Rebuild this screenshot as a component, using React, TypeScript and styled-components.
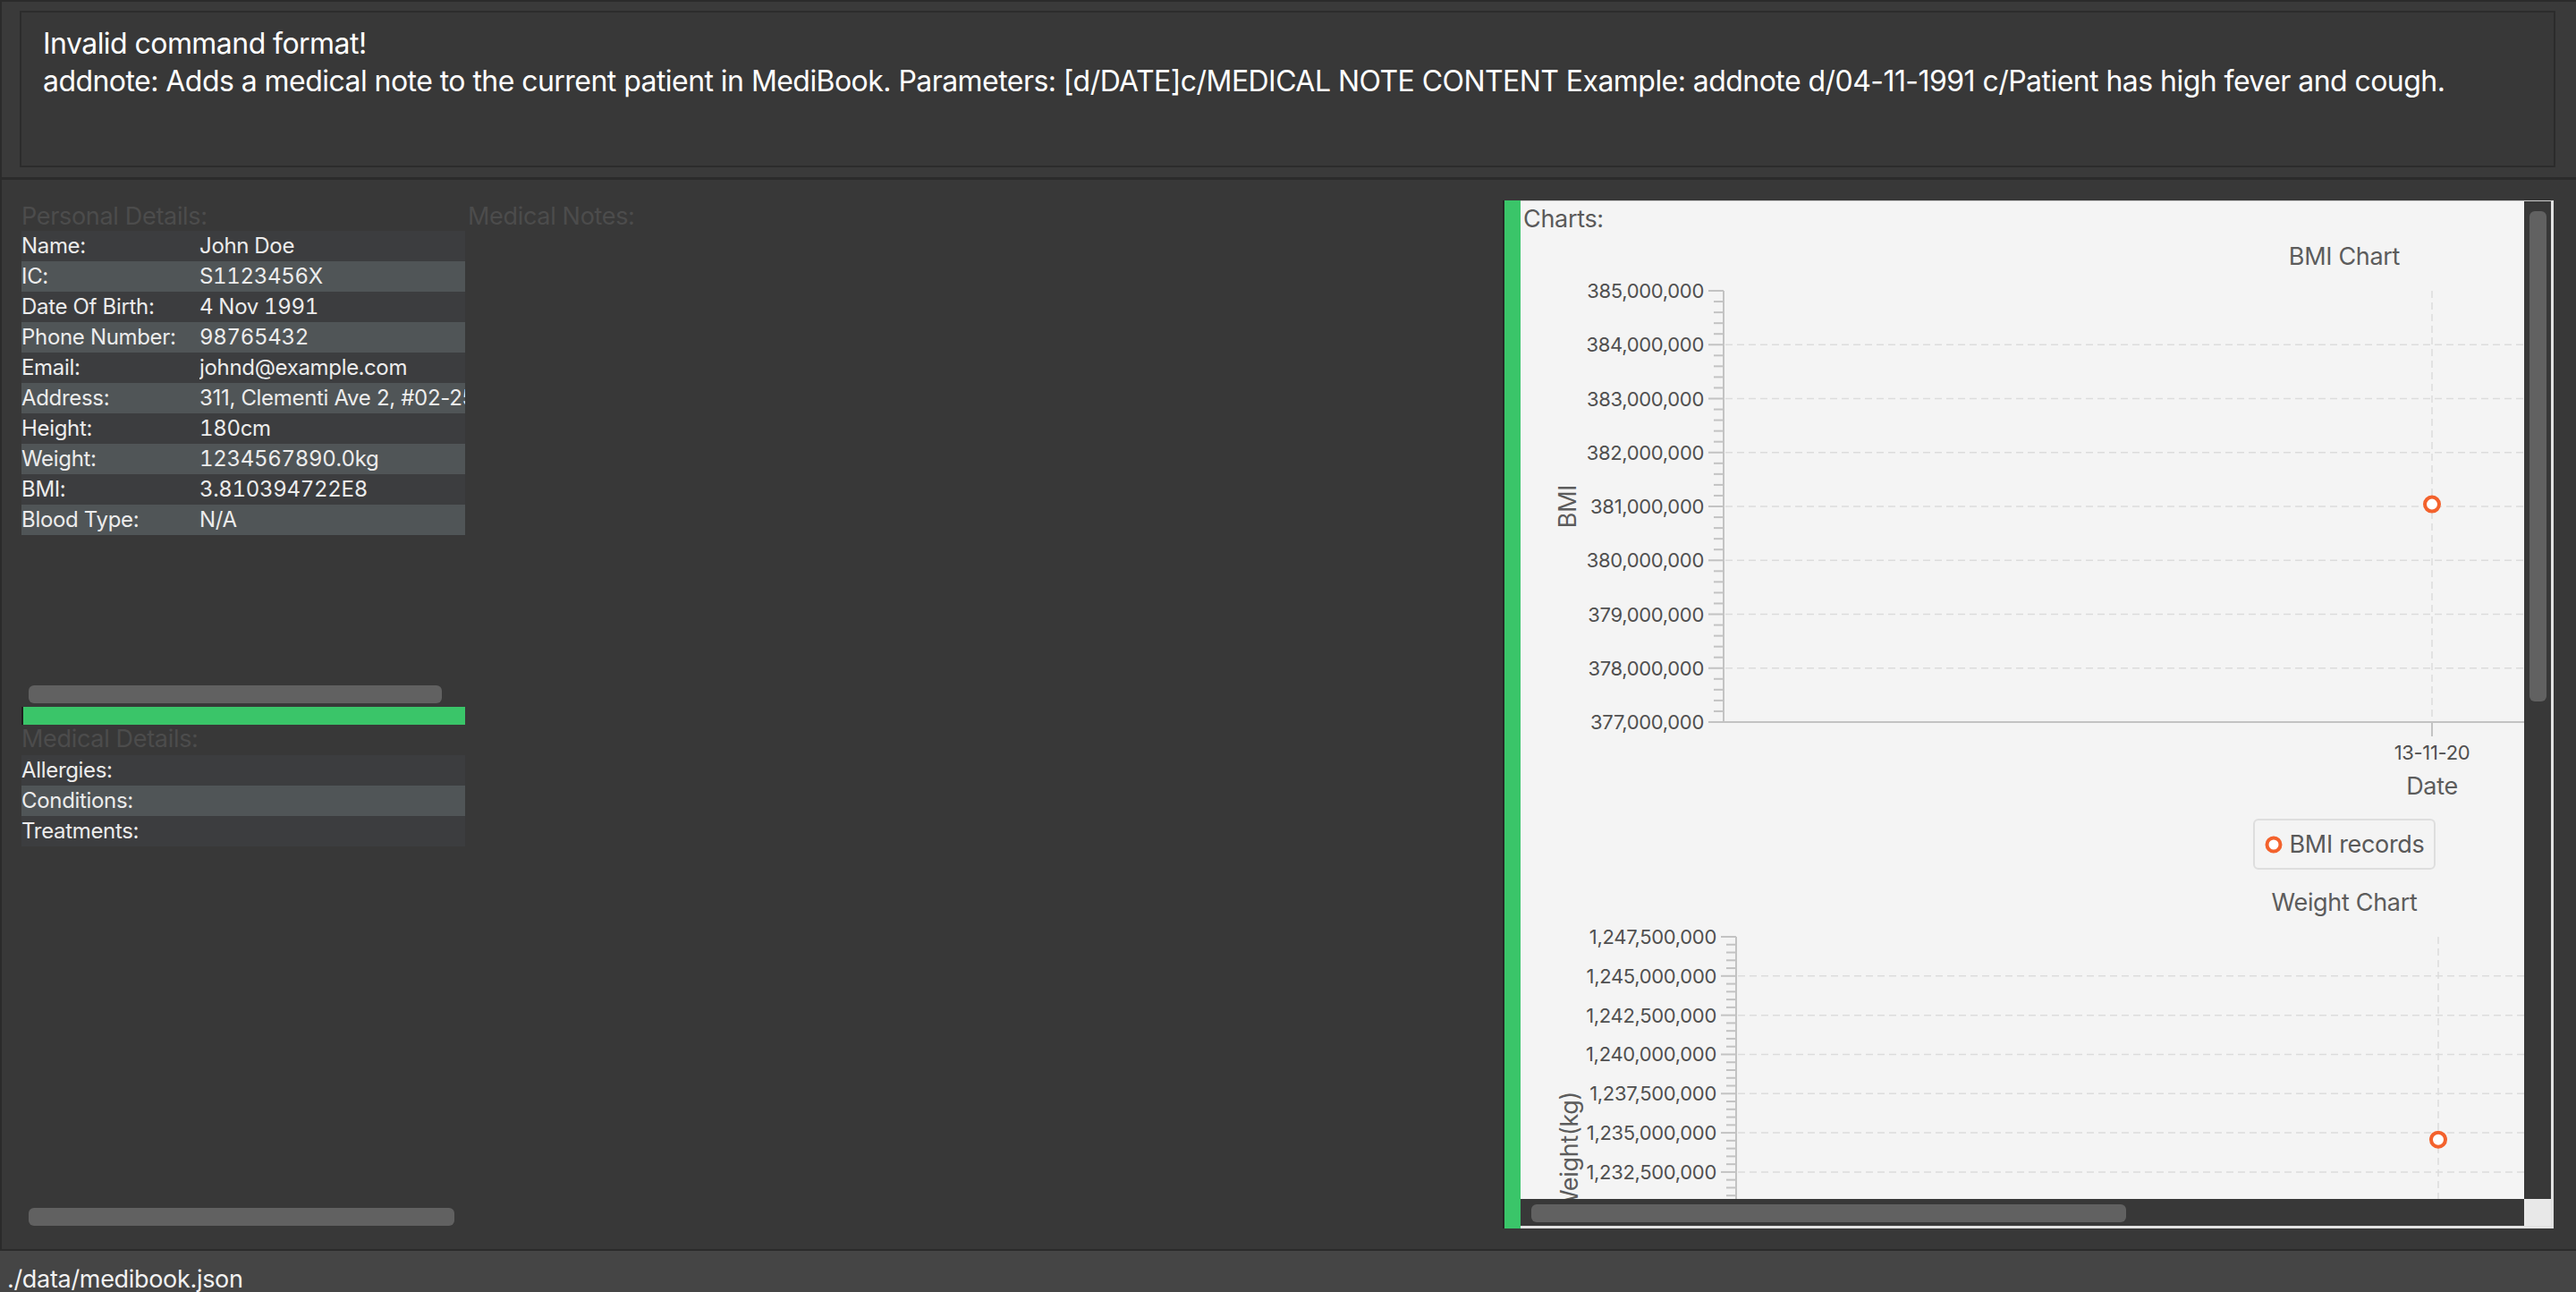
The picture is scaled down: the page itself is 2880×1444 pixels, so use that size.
import React from "react";
import styled, { createGlobalStyle } from "styled-components";

const FONT = `Inter, "Liberation Sans", Arial, sans-serif`;

const GlobalStyle = createGlobalStyle`
  html, body { margin: 0; padding: 0; background: #383838; }
  body {
    width: 2880px; height: 1444px; overflow: hidden;
    font-family: ${FONT};
    letter-spacing: -0.32px;
  }
  #root { width: 2880px; height: 1444px; }
  * { box-sizing: border-box; }
`;

const GREEN = "#3ac569";
const ORANGE = "#f3622d";

const Window = styled.div`
  width: 2880px;
  height: 1444px;
  display: flex;
  flex-direction: column;
  background: #383838;
  border-top: 2px solid #2b2b2b;
  overflow: hidden;
`;

const ResultPane = styled.div`
  height: 196px;
  display: flex;
  padding: 10px 23px 11px 20px;
  border-left: 2px solid #2b2b2b;
  background: #3a3a3a;
`;

const ResultBox = styled.div`
  flex: 1;
  border: 2px solid #2c2c2c;
  background: #383838;
  padding: 14px 24px;
  color: #ffffff;
  font-size: 32px;
  line-height: 42px;
  letter-spacing: -0.55px;
  white-space: nowrap;
  overflow: hidden;
`;

const Divider = styled.div<{ $h: number; $c: string }>`
  height: ${(p) => p.$h}px;
  background: ${(p) => p.$c};
  flex: none;
`;

const Main = styled.div`
  height: 1195px;
  display: grid;
  grid-template-columns: 496px 1160px 1175px;
  grid-template-rows: 1149px;
  padding: 23px 25px 23px 22px;
  border-left: 2px solid #2b2b2b;
`;

const LeftColumn = styled.div`
  display: flex;
  flex-direction: column;
  padding: 2px 0 3px 0;
  min-height: 0;
`;

const PersonalPane = styled.div`
  height: 564px;
  display: flex;
  flex-direction: column;
`;

const SectionHeading = styled.div<{ $gap?: number }>`
  font-size: 27px;
  line-height: 32px;
  color: #4c4c4c;
  white-space: nowrap;
  margin-bottom: ${(p) => p.$gap ?? 0}px;
`;

const DetailRow = styled.div<{ $alt: boolean }>`
  display: grid;
  grid-template-columns: 199px 1fr;
  height: 34px;
  line-height: 34px;
  font-size: 24px;
  color: #ececec;
  background: ${(p) => (p.$alt ? "#505557" : "#3c3d3f")};
  white-space: nowrap;
  overflow: hidden;
`;

const LabelCell = styled.span`
  overflow: hidden;
`;

const ValueCell = styled.span<{ $prose?: boolean }>`
  overflow: hidden;
  font-variant-numeric: ${(p) => (p.$prose ? "normal" : "tabular-nums")};
`;

const Spacer = styled.div`
  flex: 1;
`;

const Thumb = styled.div<{ $w: number; $bottom?: number }>`
  width: ${(p) => p.$w}px;
  height: 20px;
  margin-left: 8px;
  margin-bottom: ${(p) => p.$bottom ?? 0}px;
  border-radius: 6px;
  background: #616161;
  flex: none;
`;

const GreenBar = styled.div`
  height: 20px;
  background: ${GREEN};
  border-left: 2px solid #1e1e1e;
  flex: none;
`;

const NotesColumn = styled.div`
  padding: 2px 0 0 3px;
`;

const ChartsFrame = styled.div`
  display: flex;
  border-left: 2px solid #262626;
  min-height: 0;
`;

const GreenStripe = styled.div`
  width: 18px;
  background: ${GREEN};
  flex: none;
`;

const ChartsPanel = styled.div`
  flex: 1;
  min-width: 0;
  display: grid;
  grid-template-columns: 1fr 30px;
  grid-template-rows: 1fr 30px;
  background: #f4f4f4;
  border-top: 1px solid #cdcdcd;
  border-right: 3px solid #e2e2e2;
  border-bottom: 3px solid #e2e2e2;
`;

const Viewport = styled.div`
  overflow: hidden;
  min-width: 0;
  min-height: 0;
`;

const VTrack = styled.div`
  background: #383838;
  padding: 11px 5px 0 6px;
`;

const VThumb = styled.div`
  width: 19px;
  height: 548px;
  border-radius: 6px;
  background: #616161;
`;

const HTrack = styled.div`
  background: #383838;
  padding: 6px 0 0 12px;
`;

const HThumb = styled.div`
  width: 665px;
  height: 20px;
  border-radius: 6px;
  background: #616161;
`;

const Corner = styled.div`
  background: #e8e8e8;
`;

const ChartsContent = styled.div`
  width: 1842px;
  padding-top: 4px;
  display: flex;
  flex-direction: column;
`;

const ChartsLabel = styled.div`
  font-size: 27px;
  line-height: 32px;
  padding-left: 3px;
  color: #5a5a5a;
  margin-bottom: 10px;
`;

const ChartBlock = styled.div`
  width: 1842px;
  display: flex;
  flex-direction: column;
  margin-bottom: 21px;
  flex: none;
`;

const ChartTitle = styled.div`
  text-align: center;
  font-size: 27px;
  line-height: 32px;
  color: #5c5c5c;
`;

const PlotSvg = styled.svg`
  display: block;
  font-family: ${FONT};
`;

const AxisTitle = styled.div<{ $left: number }>`
  padding-left: ${(p) => p.$left}px;
  padding-right: 31px;
  text-align: center;
  font-size: 27px;
  line-height: 32px;
  color: #5c5c5c;
`;

const Legend = styled.div`
  align-self: center;
  margin-top: 20px;
  height: 57px;
  display: flex;
  align-items: center;
  gap: 8px;
  padding: 0 11px 0 11px;
  border: 2px solid #dedede;
  border-radius: 6px;
  font-size: 27px;
  color: #595959;
  white-space: nowrap;
`;

const StatusBar = styled.div`
  height: 46px;
  background: #454545;
  padding: 9px 0 0 8px;
  font-size: 27px;
  line-height: 46px;
  color: #f2f2f2;
  overflow: hidden;
  white-space: nowrap;
`;

type PlotProps = {
  axisX: number;
  ticks: number[];
  value: number;
  yLabel: string;
  yLabelX: number;
  category: string;
};

const W = 1842;
const PLOT_TOP = 22;
const PLOT_H = 482;
const PLOT_RIGHT = 1811;
const AXIS = "#c3c3c3";
const GRID = "#dcdcdc";

function Plot({ axisX, ticks, value, yLabel, yLabelX, category }: PlotProps) {
  const bottom = PLOT_TOP + PLOT_H;
  const n = ticks.length - 1;
  const step = PLOT_H / n;
  const max = ticks[0];
  const min = ticks[n];
  const cx = (axisX + PLOT_RIGHT) / 2;
  const vy = bottom - ((value - min) / (max - min)) * PLOT_H;
  const minor: number[] = [];
  for (let i = 0; i < n; i++) {
    for (let j = 1; j < 5; j++) minor.push(PLOT_TOP + i * step + (j * step) / 5);
  }
  return (
    <PlotSvg width={W} height={560} viewBox={`0 0 ${W} 560`}>
      {ticks.map((t, i) => {
        const y = PLOT_TOP + i * step;
        if (i === 0 || i === n) return null;
        return (
          <line
            key={"g" + i}
            x1={axisX + 2}
            x2={PLOT_RIGHT}
            y1={y}
            y2={y}
            stroke={GRID}
            strokeWidth={1.5}
            strokeDasharray="8 5"
          />
        );
      })}
      <line x1={cx} x2={cx} y1={PLOT_TOP} y2={bottom} stroke={GRID} strokeWidth={1.5} strokeDasharray="8 5" />
      <line x1={axisX} x2={axisX} y1={PLOT_TOP} y2={bottom} stroke={AXIS} strokeWidth={2} />
      <line x1={axisX} x2={PLOT_RIGHT} y1={bottom} y2={bottom} stroke={AXIS} strokeWidth={2} />
      {minor.map((y, i) => (
        <line key={"m" + i} x1={axisX - 11} x2={axisX} y1={y} y2={y} stroke={AXIS} strokeWidth={2} />
      ))}
      {ticks.map((t, i) => {
        const y = PLOT_TOP + i * step;
        return (
          <g key={"t" + i}>
            <line x1={axisX - 17} x2={axisX} y1={y} y2={y} stroke={AXIS} strokeWidth={2} />
            <text
              x={axisX - 22}
              y={y}
              textAnchor="end"
              dominantBaseline="central"
              fontSize={22}
              fill="#505050"
            >
              {t.toLocaleString("en-US")}
            </text>
          </g>
        );
      })}
      <line x1={cx} x2={cx} y1={bottom} y2={bottom + 16} stroke={AXIS} strokeWidth={2} />
      <text x={cx} y={bottom + 42} textAnchor="middle" fontSize={22} fill="#505050">
        {category}
      </text>
      <text
        transform={`translate(${yLabelX}, ${PLOT_TOP + PLOT_H / 2}) rotate(-90)`}
        textAnchor="middle"
        dominantBaseline="central"
        fontSize={27}
        fill="#5c5c5c"
      >
        {yLabel}
      </text>
      <circle cx={cx} cy={vy} r={8} fill="#ffffff" stroke={ORANGE} strokeWidth={4} />
    </PlotSvg>
  );
}

type ChartProps = PlotProps & { title: string; xLabel: string; legend: string };

function Chart(props: ChartProps) {
  return (
    <ChartBlock>
      <ChartTitle>{props.title}</ChartTitle>
      <Plot {...props} />
      <AxisTitle $left={props.axisX}>{props.xLabel}</AxisTitle>
      <Legend>
        <svg width={20} height={20} viewBox="0 0 20 20">
          <circle cx={10} cy={10} r={7.5} fill="#ffffff" stroke={ORANGE} strokeWidth={4} />
        </svg>
        <span>{props.legend}</span>
      </Legend>
    </ChartBlock>
  );
}

type Detail = { label: string; value: string; prose?: boolean };

const personal: Detail[] = [
  { label: "Name:", value: "John Doe" },
  { label: "IC:", value: "S1123456X" },
  { label: "Date Of Birth:", value: "4 Nov 1991" },
  { label: "Phone Number:", value: "98765432" },
  { label: "Email:", value: "johnd@example.com" },
  { label: "Address:", value: "311, Clementi Ave 2, #02-25", prose: true },
  { label: "Height:", value: "180cm" },
  { label: "Weight:", value: "1234567890.0kg" },
  { label: "BMI:", value: "3.810394722E8" },
  { label: "Blood Type:", value: "N/A" },
];

const medical: Detail[] = [
  { label: "Allergies:", value: "" },
  { label: "Conditions:", value: "" },
  { label: "Treatments:", value: "" },
];

const range = (start: number, step: number, count: number) =>
  Array.from({ length: count }, (_, i) => start - i * step);

function DetailRows({ items }: { items: Detail[] }) {
  return (
    <>
      {items.map((d, i) => (
        <DetailRow key={d.label} $alt={i % 2 === 1}>
          <LabelCell>{d.label}</LabelCell>
          <ValueCell $prose={d.prose}>{d.value}</ValueCell>
        </DetailRow>
      ))}
    </>
  );
}

export default function App() {
  return (
    <>
      <GlobalStyle />
      <Window>
        <ResultPane>
          <ResultBox>
            <div>Invalid command format!</div>
            <div>
              addnote: Adds a medical note to the current patient in MediBook. Parameters: [d/DATE]c/MEDICAL NOTE
              CONTENT Example: addnote d/04-11-1991 c/Patient has high fever and cough.
            </div>
          </ResultBox>
        </ResultPane>
        <Divider $h={3} $c="#2b2b2b" />
        <Main>
          <LeftColumn>
            <PersonalPane>
              <SectionHeading>Personal Details:</SectionHeading>
              <DetailRows items={personal} />
              <Spacer />
              <Thumb $w={462} $bottom={4} />
            </PersonalPane>
            <GreenBar />
            <SectionHeading $gap={2}>Medical Details:</SectionHeading>
            <DetailRows items={medical} />
            <Spacer />
            <Thumb $w={476} />
          </LeftColumn>
          <NotesColumn>
            <SectionHeading>Medical Notes:</SectionHeading>
          </NotesColumn>
          <ChartsFrame>
            <GreenStripe />
            <ChartsPanel>
              <Viewport>
                <ChartsContent>
                  <ChartsLabel>Charts:</ChartsLabel>
                  <Chart
                    title="BMI Chart"
                    xLabel="Date"
                    legend="BMI records"
                    axisX={227}
                    ticks={range(385000000, 1000000, 9)}
                    value={381039472.2}
                    yLabel="BMI"
                    yLabelX={52}
                    category="13-11-20"
                  />
                  <Chart
                    title="Weight Chart"
                    xLabel="Date"
                    legend="Weight records"
                    axisX={241}
                    ticks={range(1247500000, 2500000, 12)}
                    value={1234567890}
                    yLabel="Weight(kg)"
                    yLabelX={54}
                    category="13-11-20"
                  />
                </ChartsContent>
              </Viewport>
              <VTrack>
                <VThumb />
              </VTrack>
              <HTrack>
                <HThumb />
              </HTrack>
              <Corner />
            </ChartsPanel>
          </ChartsFrame>
        </Main>
        <Divider $h={2} $c="#2b2b2b" />
        <StatusBar>./data/medibook.json</StatusBar>
      </Window>
    </>
  );
}
